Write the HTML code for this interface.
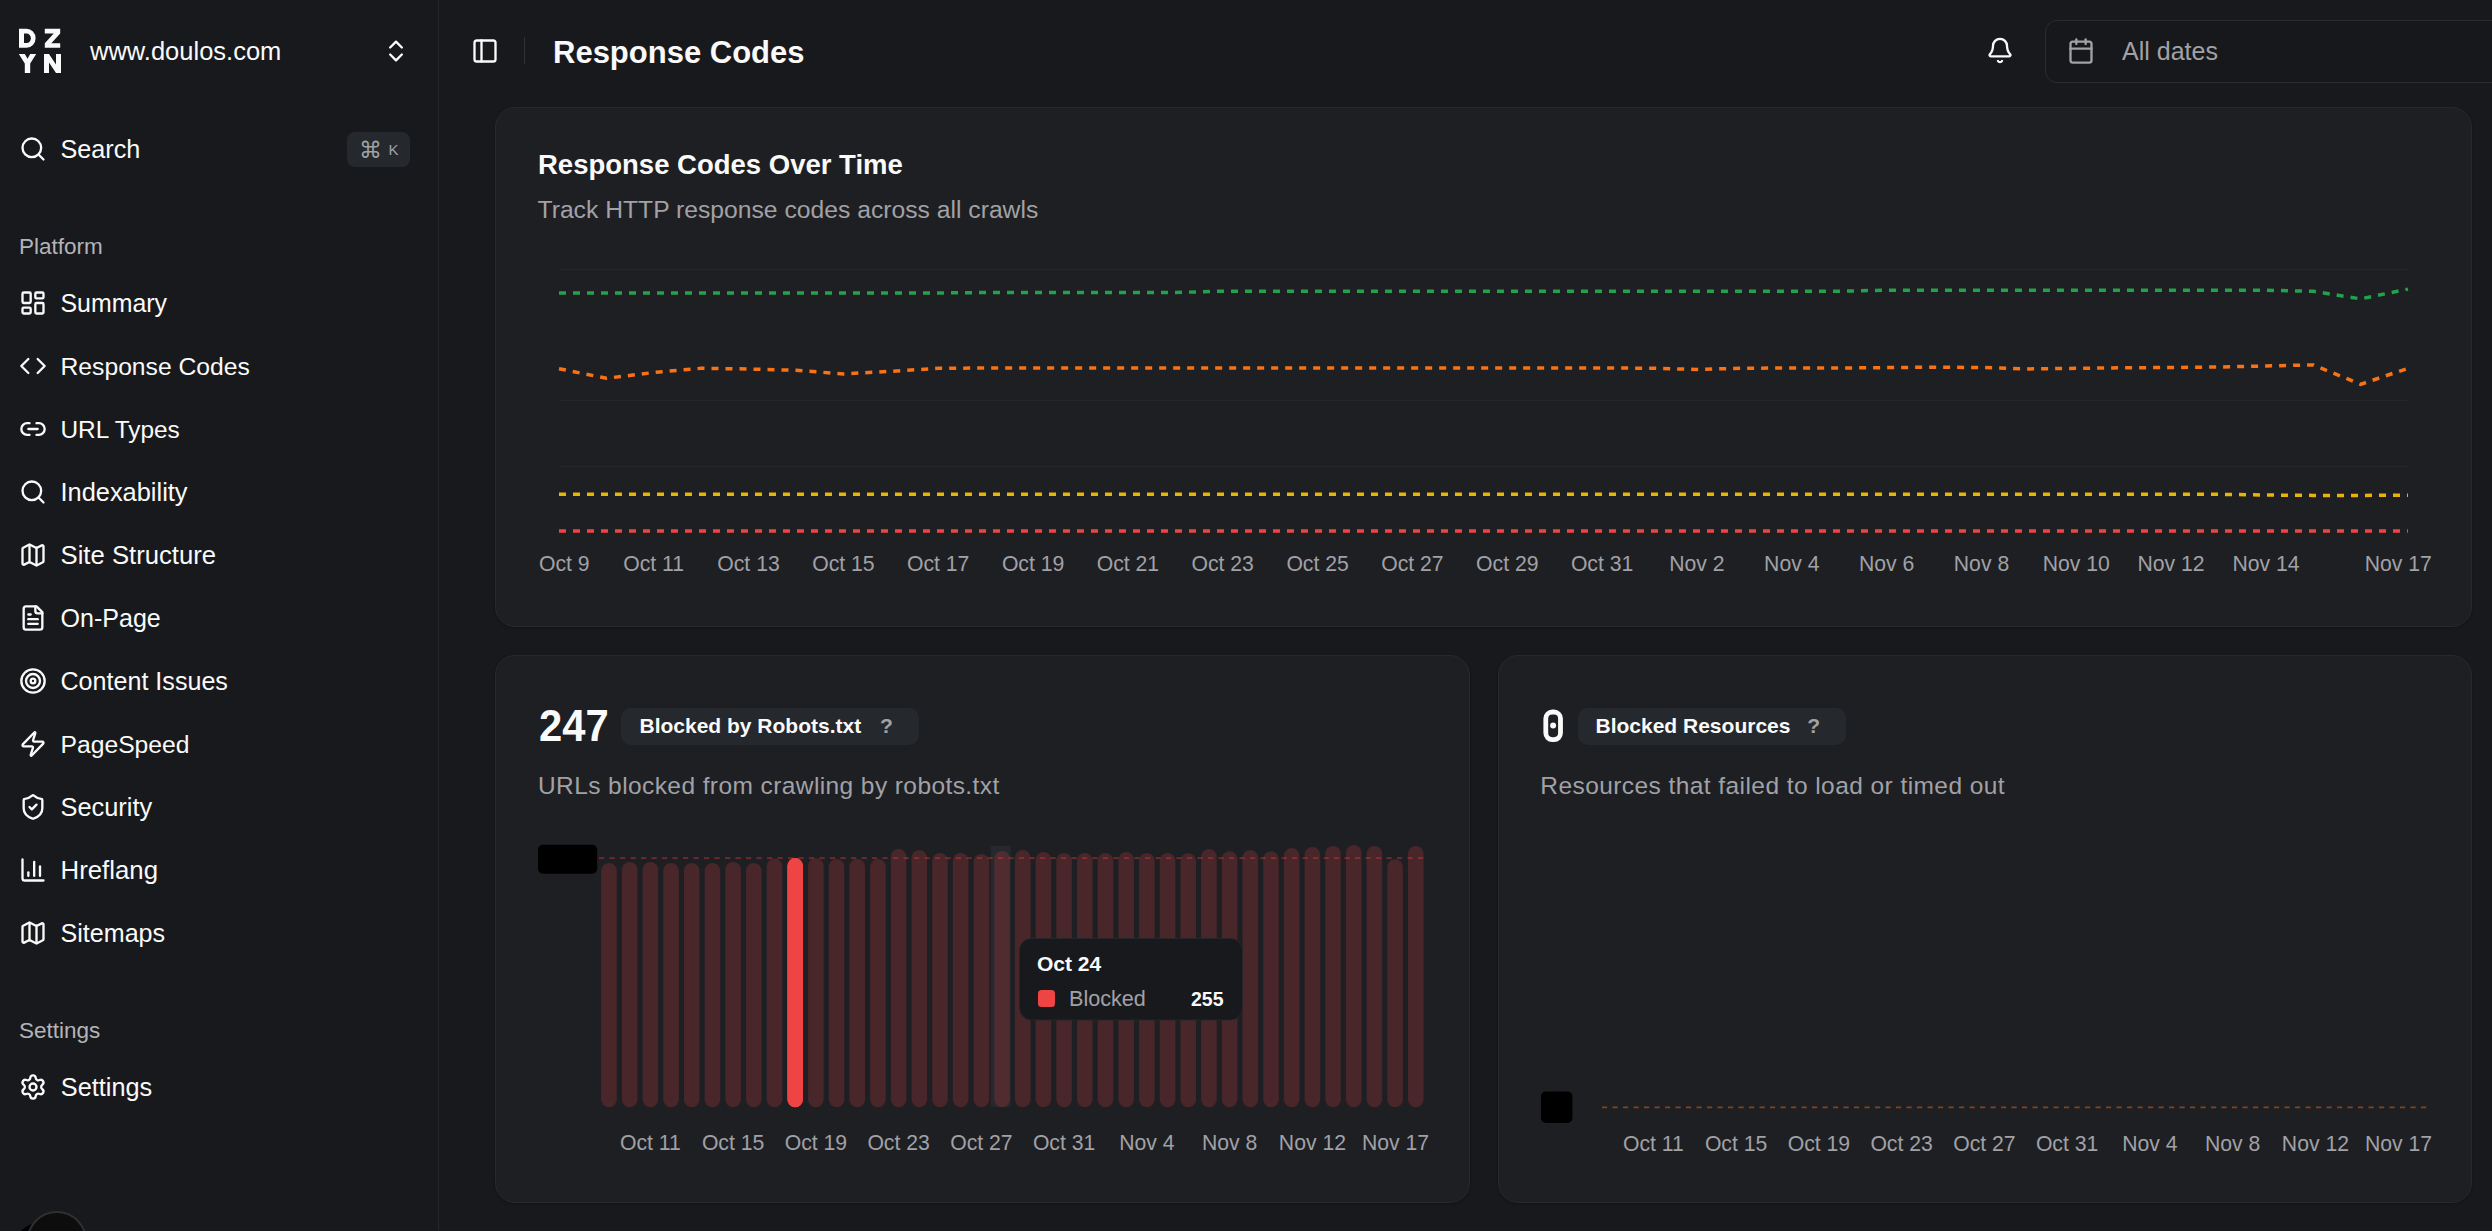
<!DOCTYPE html>
<html><head><meta charset="utf-8"><title>Response Codes</title>
<style>
html,body{margin:0;padding:0;background:#18191c;width:2492px;height:1231px;overflow:hidden;font-family:"Liberation Sans", sans-serif}
</style></head><body>
<div id="app" style="position:relative;width:2492px;height:1231px;overflow:hidden;background:#18191c">
<div style="position:absolute;left:438px;top:0px;width:1px;height:1231px;background:#25272b"></div>
<div style="position:absolute;left:495px;top:107px;width:1977px;height:520px;box-sizing:border-box;background:#1e1f23;border:1px solid #262a2d;border-radius:20px;box-shadow:0 1px 3px rgba(0,0,0,.25)"></div>
<div style="position:absolute;left:495px;top:655px;width:975px;height:548px;box-sizing:border-box;background:#1e1f23;border:1px solid #262a2d;border-radius:20px;box-shadow:0 1px 3px rgba(0,0,0,.25)"></div>
<div style="position:absolute;left:1498px;top:655px;width:974px;height:548px;box-sizing:border-box;background:#1e1f23;border:1px solid #262a2d;border-radius:20px;box-shadow:0 1px 3px rgba(0,0,0,.25)"></div>
<div style="position:absolute;left:2045px;top:20px;width:520px;height:63px;box-sizing:border-box;border:1px solid #2a2c30;border-radius:12px;background:#17181b"></div>
<div style="position:absolute;left:347px;top:132px;width:63px;height:35px;background:#25282c;border-radius:8px"></div>
<div style="position:absolute;left:621px;top:708px;width:298px;height:37px;background:#25282c;border-radius:10px"></div>
<div style="position:absolute;left:1578px;top:708px;width:268px;height:37px;background:#25282c;border-radius:10px"></div>
<div style="position:absolute;left:524px;top:37px;width:1px;height:27px;background:#2e3034"></div>
<svg width="2492" height="1231" viewBox="0 0 2492 1231" style="position:absolute;left:0;top:0" font-family='"Liberation Sans", sans-serif'><path fill-rule="evenodd" fill="#fafafa" d="M19 28.8H26.6A9 9.5 0 0 1 26.6 47.8H19Z M24 33.5H26.6A4.3 4.8 0 0 1 26.6 43.1H24Z"/>
<path fill="#fafafa" d="M44.8 28.8H60.2V33.4L51.3 43.2H60.2V47.8H44.8V43.2L53.7 33.4H44.8Z"/>
<path fill="#fafafa" d="M18.8 54H24.8L27.5 58.8L30.2 54H36.2L30.2 63.6V73H24.8V63.6Z"/>
<path fill="#fafafa" d="M44 54H49L56 64.6V54H61V73H56L49 62.4V73H44Z"/>
<text x="90" y="60" font-size="25.5" fill="#fafafa" font-weight="400" text-anchor="start" >www.doulos.com</text>
<g transform="translate(382,37) scale(1.1666666666666667)" fill="none" stroke="#fafafa" stroke-width="2" stroke-linecap="round" stroke-linejoin="round"><path d="m7 15 5 5 5-5"/><path d="m7 9 5-5 5 5"/></g>
<g transform="translate(19,135) scale(1.1666666666666667)" fill="none" stroke="#fafafa" stroke-width="2" stroke-linecap="round" stroke-linejoin="round"><circle cx="11" cy="11" r="8"/><path d="m21 21-4.3-4.3"/></g>
<text x="60.5" y="158.4" font-size="25.2" fill="#fafafa" font-weight="400" text-anchor="start" >Search</text>
<text x="358.9" y="158" font-size="23.3" fill="#a1a1a6" font-weight="400" text-anchor="start" >&#8984;</text>
<text x="388.6" y="155" font-size="15" fill="#a1a1a6" font-weight="400" text-anchor="start" >K</text>
<text x="19" y="254" font-size="22.5" fill="#b4b4b8" font-weight="400" text-anchor="start" >Platform</text>
<g transform="translate(19,289) scale(1.1666666666666667)" fill="none" stroke="#fafafa" stroke-width="2" stroke-linecap="round" stroke-linejoin="round"><rect width="7" height="9" x="3" y="3" rx="1"/><rect width="7" height="5" x="14" y="3" rx="1"/><rect width="7" height="9" x="14" y="12" rx="1"/><rect width="7" height="5" x="3" y="16" rx="1"/></g>
<text x="60.5" y="312" font-size="24.9" fill="#fafafa" font-weight="400" text-anchor="start" >Summary</text>
<g transform="translate(19,352) scale(1.1666666666666667)" fill="none" stroke="#fafafa" stroke-width="2" stroke-linecap="round" stroke-linejoin="round"><polyline points="16 18 22 12 16 6"/><polyline points="8 6 2 12 8 18"/></g>
<text x="60.5" y="375" font-size="24.7" fill="#fafafa" font-weight="400" text-anchor="start" >Response Codes</text>
<g transform="translate(19,415) scale(1.1666666666666667)" fill="none" stroke="#fafafa" stroke-width="2" stroke-linecap="round" stroke-linejoin="round"><path d="M9 17H7A5 5 0 0 1 7 7h2"/><path d="M15 7h2a5 5 0 1 1 0 10h-2"/><line x1="8" x2="16" y1="12" y2="12"/></g>
<text x="60.5" y="438" font-size="24.4" fill="#fafafa" font-weight="400" text-anchor="start" >URL Types</text>
<g transform="translate(19,478) scale(1.1666666666666667)" fill="none" stroke="#fafafa" stroke-width="2" stroke-linecap="round" stroke-linejoin="round"><circle cx="11" cy="11" r="8"/><path d="m21 21-4.3-4.3"/></g>
<text x="60.5" y="501" font-size="25.4" fill="#fafafa" font-weight="400" text-anchor="start" >Indexability</text>
<g transform="translate(19,541) scale(1.1666666666666667)" fill="none" stroke="#fafafa" stroke-width="2" stroke-linecap="round" stroke-linejoin="round"><path d="M14.106 5.553a2 2 0 0 0 1.788 0l3.659-1.83A1 1 0 0 1 21 4.619v12.764a1 1 0 0 1-.553.894l-4.553 2.277a2 2 0 0 1-1.788 0l-4.212-2.106a2 2 0 0 0-1.788 0l-3.659 1.83A1 1 0 0 1 3 19.381V6.618a1 1 0 0 1 .553-.894l4.553-2.277a2 2 0 0 1 1.788 0z"/><path d="M15 5.764v15"/><path d="M9 3.236v15"/></g>
<text x="60.5" y="564" font-size="25.7" fill="#fafafa" font-weight="400" text-anchor="start" >Site Structure</text>
<g transform="translate(19,604) scale(1.1666666666666667)" fill="none" stroke="#fafafa" stroke-width="2" stroke-linecap="round" stroke-linejoin="round"><path d="M15 2H6a2 2 0 0 0-2 2v16a2 2 0 0 0 2 2h12a2 2 0 0 0 2-2V7Z"/><path d="M14 2v4a2 2 0 0 0 2 2h4"/><path d="M10 9H8"/><path d="M16 13H8"/><path d="M16 17H8"/></g>
<text x="60.5" y="627" font-size="25.05" fill="#fafafa" font-weight="400" text-anchor="start" >On-Page</text>
<g transform="translate(19,667) scale(1.1666666666666667)" fill="none" stroke="#fafafa" stroke-width="2" stroke-linecap="round" stroke-linejoin="round"><circle cx="12" cy="12" r="10"/><circle cx="12" cy="12" r="6"/><circle cx="12" cy="12" r="2"/></g>
<text x="60.5" y="690" font-size="25.1" fill="#fafafa" font-weight="400" text-anchor="start" >Content Issues</text>
<g transform="translate(19,730) scale(1.1666666666666667)" fill="none" stroke="#fafafa" stroke-width="2" stroke-linecap="round" stroke-linejoin="round"><path d="M4 14a1 1 0 0 1-.78-1.63l9.9-10.2a.5.5 0 0 1 .86.46l-1.92 6.02A1 1 0 0 0 13 10h7a1 1 0 0 1 .78 1.63l-9.9 10.2a.5.5 0 0 1-.86-.46l1.92-6.02A1 1 0 0 0 11 14z"/></g>
<text x="60.5" y="753" font-size="24.7" fill="#fafafa" font-weight="400" text-anchor="start" >PageSpeed</text>
<g transform="translate(19,793) scale(1.1666666666666667)" fill="none" stroke="#fafafa" stroke-width="2" stroke-linecap="round" stroke-linejoin="round"><path d="M20 13c0 5-3.5 7.5-7.66 8.95a1 1 0 0 1-.67-.01C7.5 20.5 4 18 4 13V6a1 1 0 0 1 1-1c2 0 4.5-1.2 6.24-2.72a1.17 1.17 0 0 1 1.52 0C14.51 3.81 17 5 19 5a1 1 0 0 1 1 1z"/><path d="m9 12 2 2 4-4"/></g>
<text x="60.5" y="816" font-size="25.4" fill="#fafafa" font-weight="400" text-anchor="start" >Security</text>
<g transform="translate(19,856) scale(1.1666666666666667)" fill="none" stroke="#fafafa" stroke-width="2" stroke-linecap="round" stroke-linejoin="round"><path d="M3 3v16a2 2 0 0 0 2 2h16"/><path d="M18 17V9"/><path d="M13 17V5"/><path d="M8 17v-3"/></g>
<text x="60.5" y="879" font-size="25.8" fill="#fafafa" font-weight="400" text-anchor="start" >Hreflang</text>
<g transform="translate(19,919) scale(1.1666666666666667)" fill="none" stroke="#fafafa" stroke-width="2" stroke-linecap="round" stroke-linejoin="round"><path d="M14.106 5.553a2 2 0 0 0 1.788 0l3.659-1.83A1 1 0 0 1 21 4.619v12.764a1 1 0 0 1-.553.894l-4.553 2.277a2 2 0 0 1-1.788 0l-4.212-2.106a2 2 0 0 0-1.788 0l-3.659 1.83A1 1 0 0 1 3 19.381V6.618a1 1 0 0 1 .553-.894l4.553-2.277a2 2 0 0 1 1.788 0z"/><path d="M15 5.764v15"/><path d="M9 3.236v15"/></g>
<text x="60.5" y="942" font-size="25.1" fill="#fafafa" font-weight="400" text-anchor="start" >Sitemaps</text>
<text x="19" y="1038" font-size="22.5" fill="#b4b4b8" font-weight="400" text-anchor="start" >Settings</text>
<g transform="translate(19,1073) scale(1.1666666666666667)" fill="none" stroke="#fafafa" stroke-width="2" stroke-linecap="round" stroke-linejoin="round"><path d="M9.671 4.136a2.34 2.34 0 0 1 4.659 0 2.34 2.34 0 0 0 3.319 1.915 2.34 2.34 0 0 1 2.33 4.033 2.34 2.34 0 0 0 0 3.831 2.34 2.34 0 0 1-2.33 4.033 2.34 2.34 0 0 0-3.319 1.915 2.34 2.34 0 0 1-4.659 0 2.34 2.34 0 0 0-3.32-1.915 2.34 2.34 0 0 1-2.33-4.033 2.34 2.34 0 0 0 0-3.831A2.34 2.34 0 0 1 6.35 6.051a2.34 2.34 0 0 0 3.319-1.915"/><circle cx="12" cy="12" r="3"/></g>
<text x="60.8" y="1096" font-size="25.3" fill="#fafafa" font-weight="400" text-anchor="start" >Settings</text>
<circle cx="49" cy="1262" r="42" fill="#000"/>
<circle cx="56.8" cy="1241.2" r="29.2" fill="#0d0d0e" stroke="#303031" stroke-width="2"/>
<text x="104" y="1247.5" font-size="24.5" fill="#fafafa" font-weight="400" text-anchor="start" >ishbdhdmwe1000</text>
<g transform="translate(471,37) scale(1.1666666666666667)" fill="none" stroke="#fafafa" stroke-width="2" stroke-linecap="round" stroke-linejoin="round"><rect width="18" height="18" x="3" y="3" rx="2"/><path d="M9 3v18"/></g>
<text x="553" y="63.3" font-size="31" fill="#fafafa" font-weight="700" text-anchor="start" >Response Codes</text>
<g transform="translate(1986,36.5) scale(1.1666666666666667)" fill="none" stroke="#fafafa" stroke-width="2" stroke-linecap="round" stroke-linejoin="round"><path d="M10.268 21a2 2 0 0 0 3.464 0"/><path d="M3.262 15.326A1 1 0 0 0 4 17h16a1 1 0 0 0 .74-1.673C19.41 13.956 18 12.499 18 8A6 6 0 0 0 6 8c0 4.499-1.411 5.956-2.738 7.326"/></g>
<g transform="translate(2067,37) scale(1.1666666666666667)" fill="none" stroke="#a1a1a6" stroke-width="2" stroke-linecap="round" stroke-linejoin="round"><path d="M8 2v4"/><path d="M16 2v4"/><rect width="18" height="18" x="3" y="4" rx="2"/><path d="M3 10h18"/></g>
<text x="2122" y="60" font-size="25" fill="#a1a1a6" font-weight="400" text-anchor="start" >All dates</text>
<text x="538" y="173.8" font-size="27.5" fill="#fafafa" font-weight="700" text-anchor="start" >Response Codes Over Time</text>
<text x="537.5" y="218.3" font-size="24.7" fill="#a1a1a6" font-weight="400" text-anchor="start" >Track HTTP response codes across all crawls</text>
<line x1="559" x2="2408" y1="269.5" y2="269.5" stroke="#242629" stroke-width="1"/>
<line x1="559" x2="2408" y1="400.5" y2="400.5" stroke="#242629" stroke-width="1"/>
<line x1="559" x2="2408" y1="466.5" y2="466.5" stroke="#242629" stroke-width="1"/>
<polyline points="559.0,293.0 606.4,293.0 653.8,293.0 701.2,293.0 748.6,293.0 796.1,293.0 843.5,293.0 890.9,293.0 938.3,293.0 985.7,292.5 1033.1,292.5 1080.5,292.5 1127.9,292.5 1175.3,292.5 1222.7,291.2 1270.2,291.2 1317.6,291.2 1365.0,291.2 1412.4,291.2 1459.8,291.2 1507.2,291.2 1554.6,291.2 1602.0,291.2 1649.4,291.2 1696.8,291.2 1744.3,291.2 1791.7,291.2 1839.1,291.2 1886.5,290.2 1933.9,290.2 1981.3,290.2 2028.7,290.2 2076.1,290.2 2123.5,290.2 2170.9,290.2 2218.4,290.2 2265.8,290.2 2313.2,291.3 2360.6,298.9 2408.0,289.1" fill="none" stroke="#22a34b" stroke-width="3.5" stroke-dasharray="7 7"/>
<polyline points="559.0,368.7 606.4,378.3 653.8,372.5 701.2,368.3 748.6,369.0 796.1,370.3 843.5,373.9 890.9,371.3 938.3,368.3 985.7,368.0 1033.1,368.0 1080.5,368.0 1127.9,368.0 1175.3,368.0 1222.7,368.0 1270.2,368.0 1317.6,368.0 1365.0,368.0 1412.4,368.0 1459.8,368.0 1507.2,368.0 1554.6,368.0 1602.0,368.0 1649.4,368.2 1696.8,369.4 1744.3,368.2 1791.7,368.0 1839.1,368.0 1886.5,367.6 1933.9,367.2 1981.3,367.5 2028.7,368.9 2076.1,368.3 2123.5,367.8 2170.9,367.5 2218.4,367.0 2265.8,366.0 2313.2,364.9 2360.6,384.3 2408.0,368.3" fill="none" stroke="#f97316" stroke-width="3.5" stroke-dasharray="7 7"/>
<polyline points="559.0,494.3 606.4,494.3 653.8,494.3 701.2,494.3 748.6,494.3 796.1,494.3 843.5,494.3 890.9,494.3 938.3,494.3 985.7,494.3 1033.1,494.3 1080.5,494.3 1127.9,494.3 1175.3,494.3 1222.7,494.3 1270.2,494.3 1317.6,494.3 1365.0,494.3 1412.4,494.3 1459.8,494.3 1507.2,494.3 1554.6,494.3 1602.0,494.3 1649.4,494.3 1696.8,494.3 1744.3,494.3 1791.7,494.3 1839.1,494.3 1886.5,494.3 1933.9,494.3 1981.3,494.3 2028.7,494.3 2076.1,494.3 2123.5,494.3 2170.9,494.3 2218.4,494.3 2265.8,495.0 2313.2,495.4 2360.6,495.4 2408.0,495.2" fill="none" stroke="#eab308" stroke-width="3.5" stroke-dasharray="7 7"/>
<polyline points="559.0,530.9 606.4,530.9 653.8,530.9 701.2,530.9 748.6,530.9 796.1,530.9 843.5,530.9 890.9,530.9 938.3,530.9 985.7,530.9 1033.1,530.9 1080.5,530.9 1127.9,530.9 1175.3,530.9 1222.7,530.9 1270.2,530.9 1317.6,530.9 1365.0,530.9 1412.4,530.9 1459.8,530.9 1507.2,530.9 1554.6,530.9 1602.0,530.9 1649.4,530.9 1696.8,530.9 1744.3,530.9 1791.7,530.9 1839.1,530.9 1886.5,530.9 1933.9,530.9 1981.3,530.9 2028.7,530.9 2076.1,530.9 2123.5,530.9 2170.9,530.9 2218.4,530.9 2265.8,530.9 2313.2,530.9 2360.6,530.9 2408.0,530.9" fill="none" stroke="#ef4444" stroke-width="3.5" stroke-dasharray="7 7"/>
<text x="564.3" y="571.4" font-size="21.2" fill="#a1a1a6" font-weight="400" text-anchor="middle" >Oct 9</text>
<text x="653.7" y="571.4" font-size="21.2" fill="#a1a1a6" font-weight="400" text-anchor="middle" >Oct 11</text>
<text x="748.5" y="571.4" font-size="21.2" fill="#a1a1a6" font-weight="400" text-anchor="middle" >Oct 13</text>
<text x="843.4" y="571.4" font-size="21.2" fill="#a1a1a6" font-weight="400" text-anchor="middle" >Oct 15</text>
<text x="938.2" y="571.4" font-size="21.2" fill="#a1a1a6" font-weight="400" text-anchor="middle" >Oct 17</text>
<text x="1033.1" y="571.4" font-size="21.2" fill="#a1a1a6" font-weight="400" text-anchor="middle" >Oct 19</text>
<text x="1127.9" y="571.4" font-size="21.2" fill="#a1a1a6" font-weight="400" text-anchor="middle" >Oct 21</text>
<text x="1222.7" y="571.4" font-size="21.2" fill="#a1a1a6" font-weight="400" text-anchor="middle" >Oct 23</text>
<text x="1317.6" y="571.4" font-size="21.2" fill="#a1a1a6" font-weight="400" text-anchor="middle" >Oct 25</text>
<text x="1412.4" y="571.4" font-size="21.2" fill="#a1a1a6" font-weight="400" text-anchor="middle" >Oct 27</text>
<text x="1507.3" y="571.4" font-size="21.2" fill="#a1a1a6" font-weight="400" text-anchor="middle" >Oct 29</text>
<text x="1602.1" y="571.4" font-size="21.2" fill="#a1a1a6" font-weight="400" text-anchor="middle" >Oct 31</text>
<text x="1696.9" y="571.4" font-size="21.2" fill="#a1a1a6" font-weight="400" text-anchor="middle" >Nov 2</text>
<text x="1791.8" y="571.4" font-size="21.2" fill="#a1a1a6" font-weight="400" text-anchor="middle" >Nov 4</text>
<text x="1886.6" y="571.4" font-size="21.2" fill="#a1a1a6" font-weight="400" text-anchor="middle" >Nov 6</text>
<text x="1981.5" y="571.4" font-size="21.2" fill="#a1a1a6" font-weight="400" text-anchor="middle" >Nov 8</text>
<text x="2076.3" y="571.4" font-size="21.2" fill="#a1a1a6" font-weight="400" text-anchor="middle" >Nov 10</text>
<text x="2171.1" y="571.4" font-size="21.2" fill="#a1a1a6" font-weight="400" text-anchor="middle" >Nov 12</text>
<text x="2266.0" y="571.4" font-size="21.2" fill="#a1a1a6" font-weight="400" text-anchor="middle" >Nov 14</text>
<text x="2398.3" y="571.4" font-size="21.2" fill="#a1a1a6" font-weight="400" text-anchor="middle" >Nov 17</text>
<text transform="translate(539,741) scale(0.95,1)" font-size="44" fill="#fafafa" font-weight="700">247</text>
<text x="639.5" y="733.2" font-size="21" fill="#fafafa" font-weight="700" text-anchor="start" >Blocked by Robots.txt</text>
<text x="880" y="733.2" font-size="21" fill="#a1a1a6" font-weight="700" text-anchor="start" >?</text>
<text x="538" y="793.7" font-size="24.5" fill="#a1a1a6" font-weight="400" text-anchor="start" letter-spacing="0.41" >URLs blocked from crawling by robots.txt</text>
<rect x="538" y="844.7" width="59.2" height="29" rx="5" fill="#000"/>
<rect x="990.7" y="846" width="20.2" height="261" fill="#25282c"/>
<rect x="601.20" y="863" width="15.6" height="244.3" rx="7.8" fill="#48262a"/>
<rect x="621.89" y="862" width="15.6" height="245.3" rx="7.8" fill="#48262a"/>
<rect x="642.57" y="862" width="15.6" height="245.3" rx="7.8" fill="#48262a"/>
<rect x="663.26" y="863" width="15.6" height="244.3" rx="7.8" fill="#48262a"/>
<rect x="683.95" y="863" width="15.6" height="244.3" rx="7.8" fill="#48262a"/>
<rect x="704.64" y="863" width="15.6" height="244.3" rx="7.8" fill="#48262a"/>
<rect x="725.32" y="862" width="15.6" height="245.3" rx="7.8" fill="#48262a"/>
<rect x="746.01" y="863" width="15.6" height="244.3" rx="7.8" fill="#48262a"/>
<rect x="766.70" y="858.5" width="15.6" height="248.8" rx="7.8" fill="#48262a"/>
<rect x="787.38" y="858.1" width="15.6" height="249.2" rx="7.8" fill="#ef4444"/>
<rect x="808.07" y="858.3" width="15.6" height="249.0" rx="7.8" fill="#48262a"/>
<rect x="828.76" y="859" width="15.6" height="248.3" rx="7.8" fill="#48262a"/>
<rect x="849.45" y="859" width="15.6" height="248.3" rx="7.8" fill="#48262a"/>
<rect x="870.13" y="859" width="15.6" height="248.3" rx="7.8" fill="#48262a"/>
<rect x="890.82" y="849" width="15.6" height="258.3" rx="7.8" fill="#48262a"/>
<rect x="911.51" y="850" width="15.6" height="257.3" rx="7.8" fill="#48262a"/>
<rect x="932.19" y="853" width="15.6" height="254.3" rx="7.8" fill="#48262a"/>
<rect x="952.88" y="853" width="15.6" height="254.3" rx="7.8" fill="#48262a"/>
<rect x="973.57" y="854" width="15.6" height="253.3" rx="7.8" fill="#48262a"/>
<rect x="994.26" y="851" width="15.6" height="256.3" rx="7.8" fill="#502c31"/>
<rect x="1014.94" y="850" width="15.6" height="257.3" rx="7.8" fill="#48262a"/>
<rect x="1035.63" y="852" width="15.6" height="255.3" rx="7.8" fill="#48262a"/>
<rect x="1056.32" y="853" width="15.6" height="254.3" rx="7.8" fill="#48262a"/>
<rect x="1077.01" y="853" width="15.6" height="254.3" rx="7.8" fill="#48262a"/>
<rect x="1097.69" y="853" width="15.6" height="254.3" rx="7.8" fill="#48262a"/>
<rect x="1118.38" y="852" width="15.6" height="255.3" rx="7.8" fill="#48262a"/>
<rect x="1139.07" y="853" width="15.6" height="254.3" rx="7.8" fill="#48262a"/>
<rect x="1159.75" y="853" width="15.6" height="254.3" rx="7.8" fill="#48262a"/>
<rect x="1180.44" y="853.3" width="15.6" height="254.0" rx="7.8" fill="#48262a"/>
<rect x="1201.13" y="849" width="15.6" height="258.3" rx="7.8" fill="#48262a"/>
<rect x="1221.82" y="851.2" width="15.6" height="256.1" rx="7.8" fill="#48262a"/>
<rect x="1242.50" y="850" width="15.6" height="257.3" rx="7.8" fill="#48262a"/>
<rect x="1263.19" y="851.2" width="15.6" height="256.1" rx="7.8" fill="#48262a"/>
<rect x="1283.88" y="848.1" width="15.6" height="259.2" rx="7.8" fill="#48262a"/>
<rect x="1304.56" y="847" width="15.6" height="260.3" rx="7.8" fill="#48262a"/>
<rect x="1325.25" y="846" width="15.6" height="261.3" rx="7.8" fill="#48262a"/>
<rect x="1345.94" y="845" width="15.6" height="262.3" rx="7.8" fill="#48262a"/>
<rect x="1366.63" y="846" width="15.6" height="261.3" rx="7.8" fill="#48262a"/>
<rect x="1387.31" y="859.2" width="15.6" height="248.1" rx="7.8" fill="#48262a"/>
<rect x="1408.00" y="846" width="15.6" height="261.3" rx="7.8" fill="#48262a"/>
<line x1="599" x2="1424" y1="858.1" y2="858.1" stroke="#ef4444" stroke-opacity="0.38" stroke-width="1.8" stroke-dasharray="5.2 5.3"/>
<rect x="787.38" y="858.1" width="15.6" height="249.2" rx="7.8" fill="#ef4444"/>
<text x="650.4" y="1150.3" font-size="21.2" fill="#a1a1a6" font-weight="400" text-anchor="middle" >Oct 11</text>
<text x="733.1" y="1150.3" font-size="21.2" fill="#a1a1a6" font-weight="400" text-anchor="middle" >Oct 15</text>
<text x="815.9" y="1150.3" font-size="21.2" fill="#a1a1a6" font-weight="400" text-anchor="middle" >Oct 19</text>
<text x="898.6" y="1150.3" font-size="21.2" fill="#a1a1a6" font-weight="400" text-anchor="middle" >Oct 23</text>
<text x="981.4" y="1150.3" font-size="21.2" fill="#a1a1a6" font-weight="400" text-anchor="middle" >Oct 27</text>
<text x="1064.1" y="1150.3" font-size="21.2" fill="#a1a1a6" font-weight="400" text-anchor="middle" >Oct 31</text>
<text x="1146.9" y="1150.3" font-size="21.2" fill="#a1a1a6" font-weight="400" text-anchor="middle" >Nov 4</text>
<text x="1229.6" y="1150.3" font-size="21.2" fill="#a1a1a6" font-weight="400" text-anchor="middle" >Nov 8</text>
<text x="1312.4" y="1150.3" font-size="21.2" fill="#a1a1a6" font-weight="400" text-anchor="middle" >Nov 12</text>
<text x="1395.5" y="1150.3" font-size="21.2" fill="#a1a1a6" font-weight="400" text-anchor="middle" >Nov 17</text>
<rect x="1019.5" y="938.5" width="223" height="81.5" rx="12" fill="#18191c" stroke="#242629" stroke-width="1"/>
<text x="1037" y="971" font-size="21" fill="#fafafa" font-weight="700" text-anchor="start" >Oct 24</text>
<rect x="1038" y="990" width="17" height="17" rx="3.5" fill="#ef4444"/>
<text x="1069" y="1006.1" font-size="21.6" fill="#a1a1a6" font-weight="400" text-anchor="start" >Blocked</text>
<text x="1223.5" y="1006" font-size="19.5" fill="#fafafa" font-weight="700" text-anchor="end" >255</text>
<rect x="1545.8" y="712" width="14.7" height="27.6" rx="6.5" fill="none" stroke="#fafafa" stroke-width="4.8"/><circle cx="1553.1" cy="725.6" r="3" fill="#fafafa"/>
<text x="1595.5" y="733.2" font-size="21" fill="#fafafa" font-weight="700" text-anchor="start" >Blocked Resources</text>
<text x="1807.3" y="733.2" font-size="21" fill="#a1a1a6" font-weight="700" text-anchor="start" >?</text>
<text x="1540.3" y="794" font-size="24.5" fill="#a1a1a6" font-weight="400" text-anchor="start" letter-spacing="0.43" >Resources that failed to load or timed out</text>
<rect x="1541" y="1091.4" width="31.4" height="31.6" rx="5" fill="#000"/>
<line x1="1602" x2="2427" y1="1107.4" y2="1107.4" stroke="#f97316" stroke-opacity="0.45" stroke-width="1.6" stroke-dasharray="5.2 5.3"/>
<text x="1653.4" y="1150.5" font-size="21.2" fill="#a1a1a6" font-weight="400" text-anchor="middle" >Oct 11</text>
<text x="1736.1" y="1150.5" font-size="21.2" fill="#a1a1a6" font-weight="400" text-anchor="middle" >Oct 15</text>
<text x="1818.9" y="1150.5" font-size="21.2" fill="#a1a1a6" font-weight="400" text-anchor="middle" >Oct 19</text>
<text x="1901.6" y="1150.5" font-size="21.2" fill="#a1a1a6" font-weight="400" text-anchor="middle" >Oct 23</text>
<text x="1984.4" y="1150.5" font-size="21.2" fill="#a1a1a6" font-weight="400" text-anchor="middle" >Oct 27</text>
<text x="2067.1" y="1150.5" font-size="21.2" fill="#a1a1a6" font-weight="400" text-anchor="middle" >Oct 31</text>
<text x="2149.9" y="1150.5" font-size="21.2" fill="#a1a1a6" font-weight="400" text-anchor="middle" >Nov 4</text>
<text x="2232.6" y="1150.5" font-size="21.2" fill="#a1a1a6" font-weight="400" text-anchor="middle" >Nov 8</text>
<text x="2315.4" y="1150.5" font-size="21.2" fill="#a1a1a6" font-weight="400" text-anchor="middle" >Nov 12</text>
<text x="2398.5" y="1150.5" font-size="21.2" fill="#a1a1a6" font-weight="400" text-anchor="middle" >Nov 17</text></svg>
</div>
</body></html>
